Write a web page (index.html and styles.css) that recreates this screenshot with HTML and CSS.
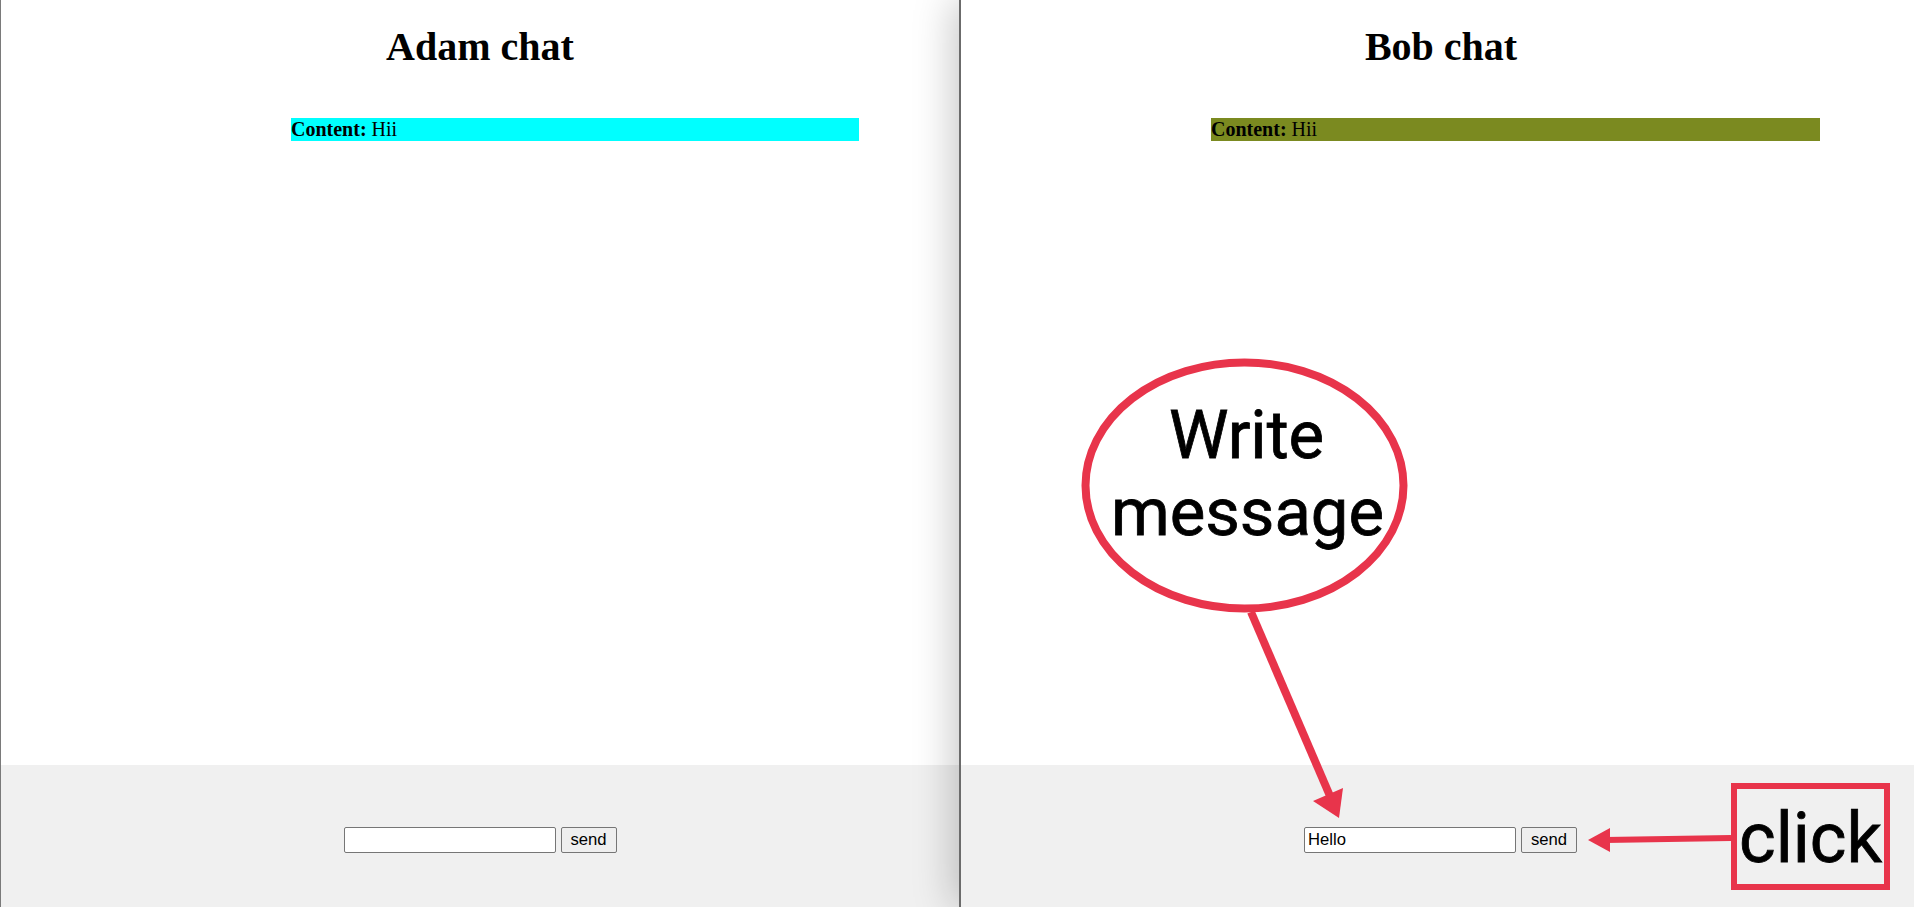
FILE: index.html
```html
<!DOCTYPE html>
<html>
<head>
<meta charset="utf-8">
<title>Chat</title>
<link rel="stylesheet" href="styles.css">
</head>
<body>
<div class="page">
  <section class="pane pane-left">
    <div class="chat">
      <h1 class="title">Adam chat</h1>
      <div class="msg msg-adam"><b>Content:</b> Hii</div>
    </div>
    <div class="footer">
      <input class="field" type="text" value="">
      <button class="send">send</button>
    </div>
  </section>
  <section class="pane pane-right">
    <div class="chat">
      <h1 class="title">Bob chat</h1>
      <div class="msg msg-bob"><b>Content:</b> Hii</div>
    </div>
    <div class="footer">
      <input class="field" type="text" value="Hello">
      <button class="send">send</button>
    </div>
  </section>
  <svg class="annot" width="1914" height="907" viewBox="0 0 1914 907">
    <ellipse cx="1244.5" cy="485.5" rx="159" ry="123" fill="none" stroke="#e8344b" stroke-width="8"/>
    <text class="annot-text" x="1246.5" y="458" text-anchor="middle" font-size="67">Write</text>
    <text class="annot-text" x="1247.5" y="535" text-anchor="middle" font-size="67">message</text>
    <line x1="1251" y1="612" x2="1330" y2="796" stroke="#e8344b" stroke-width="8"/>
    <polygon points="1339,818 1313,801 1343,788" fill="#e8344b"/>
    <rect x="1734" y="786" width="153" height="101" fill="none" stroke="#e8344b" stroke-width="6"/>
    <text class="annot-text" x="1810.5" y="862" text-anchor="middle" font-size="70">click</text>
    <line x1="1731" y1="838" x2="1605" y2="840" stroke="#e8344b" stroke-width="6"/>
    <polygon points="1588,840 1610,828 1610,852" fill="#e8344b"/>
  </svg>
</div>
</body>
</html>
```

FILE: styles.css
```css
html, body {
  margin: 0;
  padding: 0;
  background: #ffffff;
}

.page {
  position: relative;
  display: flex;
  width: 1914px;
  height: 907px;
  overflow: hidden;
  font-family: "Liberation Serif", "Times New Roman", serif;
  color: #000;
}

.pane {
  display: flex;
  flex-direction: column;
  box-sizing: border-box;
  background: #ffffff;
}

.pane-left {
  width: 959px;
  border-left: 1px solid #7a7a7a;
}

.pane-right {
  flex: 1;
  border-left: 2px solid #6b6b6b;
  position: relative;
  z-index: 1;
  box-shadow: -6px 0 38px rgba(0, 0, 0, 0.22);
}

.chat {
  flex: 1;
  background: #ffffff;
}

.title {
  margin: 24px 0 0;
  font-size: 40px;
  line-height: 46px;
  font-weight: 700;
  text-align: center;
}

.pane-right .title {
  padding-left: 7px;
}

.msg {
  margin-top: 48px;
  font-size: 20px;
  line-height: 23px;
}

.msg-adam {
  margin-left: 290px;
  width: 568px;
  background: #00ffff;
}

.msg-bob {
  margin-left: 250px;
  width: 609px;
  background: #7b8a20;
}

.footer {
  height: 142px;
  box-sizing: border-box;
  padding-top: 62px;
  background: #f0f0f0;
  display: flex;
  justify-content: center;
  align-items: flex-start;
  gap: 5px;
}

.pane-right .footer {
  padding-left: 6px;
}

.field {
  width: 212px;
  height: 26px;
  box-sizing: border-box;
  margin: 0;
  padding: 1px 3px;
  border: 1px solid #767676;
  border-radius: 2px;
  background: #ffffff;
  font-family: "Liberation Sans", Arial, sans-serif;
  font-size: 16.67px;
  color: #000;
}

.send {
  width: 56px;
  height: 26px;
  box-sizing: border-box;
  margin: 0;
  padding: 0;
  border: 1px solid #767676;
  border-radius: 2px;
  background: #efefef;
  font-family: "Liberation Sans", Arial, sans-serif;
  font-size: 16.67px;
  color: #000;
}

.annot {
  position: absolute;
  top: 0;
  left: 0;
  z-index: 5;
  pointer-events: none;
}

.annot-text {
  font-family: Roboto, "Noto Sans", sans-serif;
  font-weight: 400;
  fill: #000000;
  stroke: #000000;
  stroke-width: 0.8px;
  filter: blur(0.7px);
}
```
